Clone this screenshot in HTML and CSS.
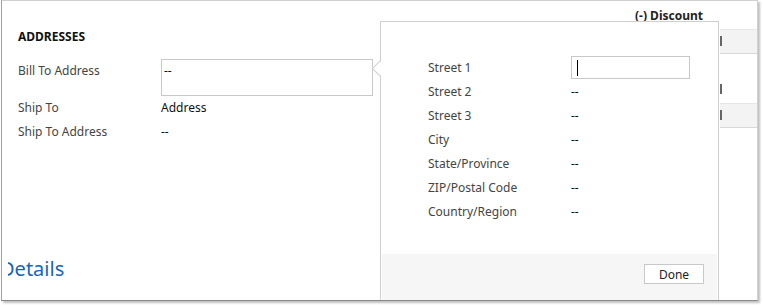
FILE: index.html
```html
<html>

<head>
  <meta name="viewport" content="width=device-width, initial-scale=1">
  <link rel="stylesheet" href="styles.css">
</head>

<body>
  <div class="window">
    <div class="addresses">
      <div class="heading">ADDRESSES</div>
      <div class="fields">
        <div class="label tall">Bill To Address</div>
        <div class="value"><div class="address-box">--</div></div>
        <div class="label">Ship To</div>
        <div class="value">Address</div>
        <div class="label">Ship To Address</div>
        <div class="value">--</div>
      </div>
      <div class="details"><span>Details</span></div>
    </div>

    <div class="summary">
      <div class="summary-title">(-) Discount</div>
      <div class="cut bar"><i></i></div>
      <div class="cut"><i></i></div>
      <div class="cut bar"><i></i></div>
    </div>

    <!-- flyout over the form -->
    <div class="flyout">
      <div class="notch"></div>
      <div class="flyout-body">
        <div class="label">Street 1</div>
        <div class="value"><div class="edit"><span class="caret"></span></div></div>
        <div class="label">Street 2</div>
        <div class="value">--</div>
        <div class="label">Street 3</div>
        <div class="value">--</div>
        <div class="label">City</div>
        <div class="value">--</div>
        <div class="label">State/Province</div>
        <div class="value">--</div>
        <div class="label">ZIP/Postal Code</div>
        <div class="value">--</div>
        <div class="label">Country/Region</div>
        <div class="value">--</div>
      </div>
      <div class="flyout-footer">
        <button class="done">Done</button>
      </div>
    </div>
  </div>
</body>

</html>
```

FILE: styles.css
```css
body {
  margin: 0;
  background-color: white;
  font-family: "Segoe UI", "Noto Sans", sans-serif;
  font-size: 12px;
  color: #222;
}

.window {
  position: relative;
  display: flex;
  margin-left: 1px;
  width: 755px;
  height: 299px;
  border: 1px solid #d0d0d0;
  border-left-color: #a0a0a0;
  border-bottom-color: #888;
  box-shadow: 2px 2px 2px rgba(0, 0, 0, 0.25);
  overflow: hidden;
}

.addresses {
  width: 354px;
  padding: 28px 0 0 16px;
  display: flex;
  flex-direction: column;
}

.heading {
  font-weight: bold;
  color: #111;
  line-height: 16px;
}

.fields {
  display: grid;
  grid-template-columns: 143px 212px;
  grid-template-rows: 37px;
  grid-auto-rows: 24px;
  margin-top: 14px;
}

.label {
  color: #444;
  line-height: 24px;
}

.value {
  line-height: 24px;
  color: #111;
}

.address-box {
  box-sizing: border-box;
  height: 37px;
  border: 1px solid #c8c8c8;
  padding: 0 2px;
  line-height: 22px;
}

.details {
  margin-top: auto;
  margin-bottom: 18px;
  margin-left: -10px;
  overflow: hidden;
}

.details span {
  display: block;
  margin-left: -8px;
  font-size: 20px;
  line-height: 26px;
  color: #1a64b8;
}

.summary {
  flex: 1;
  padding-top: 6px;
}

.summary-title {
  font-weight: bold;
  color: #222;
  text-align: right;
  padding-right: 54px;
  line-height: 18px;
}

.cut {
  margin-left: 348px;
  height: 23px;
  position: relative;
}

.cut.bar {
  background-color: #f3f3f3;
  border-top: 1px solid #e6e6e6;
  border-bottom: 1px solid #d8d8d8;
  margin-top: 4px;
}

.cut+.cut {
  margin-top: 24px;
}

.cut+.cut+.cut {
  margin-top: 2px;
}

.cut i {
  position: absolute;
  left: 0;
  top: 6px;
  width: 2px;
  height: 10px;
  background-color: #666;
}

.flyout {
  position: absolute;
  left: 378px;
  top: 20px;
  width: 337px;
  height: 290px;
  border: 1px solid #cfcfcf;
  background-color: white;
  display: flex;
  flex-direction: column;
}

.notch {
  position: absolute;
  left: -7px;
  top: 41px;
  width: 11px;
  height: 11px;
  box-sizing: border-box;
  background-color: white;
  border-left: 1px solid #cfcfcf;
  border-bottom: 1px solid #cfcfcf;
  transform: rotate(45deg);
}

.flyout-body {
  display: grid;
  grid-template-columns: 143px 119px;
  grid-auto-rows: 24px;
  padding: 34px 0 0 47px;
  height: 197px;
  box-sizing: border-box;
}

.flyout-body .value:first-of-type {
  line-height: normal;
}

.edit {
  box-sizing: border-box;
  height: 23px;
  border: 1px solid #c8c8c8;
  padding: 3px 0 0 5px;
}

.caret {
  display: block;
  width: 1px;
  height: 16px;
  background-color: #000;
}

.flyout-footer {
  flex: 1;
  margin: 35px 1px 0 1px;
  background-color: #f6f6f6;
  padding: 10px 13px 0 0;
  text-align: right;
}

.done {
  width: 60px;
  height: 20px;
  padding: 0;
  border: 1px solid #c8c8c8;
  background-color: white;
  font-family: "Segoe UI", "Noto Sans", sans-serif;
  font-size: 12px;
  color: #222;
}
```
